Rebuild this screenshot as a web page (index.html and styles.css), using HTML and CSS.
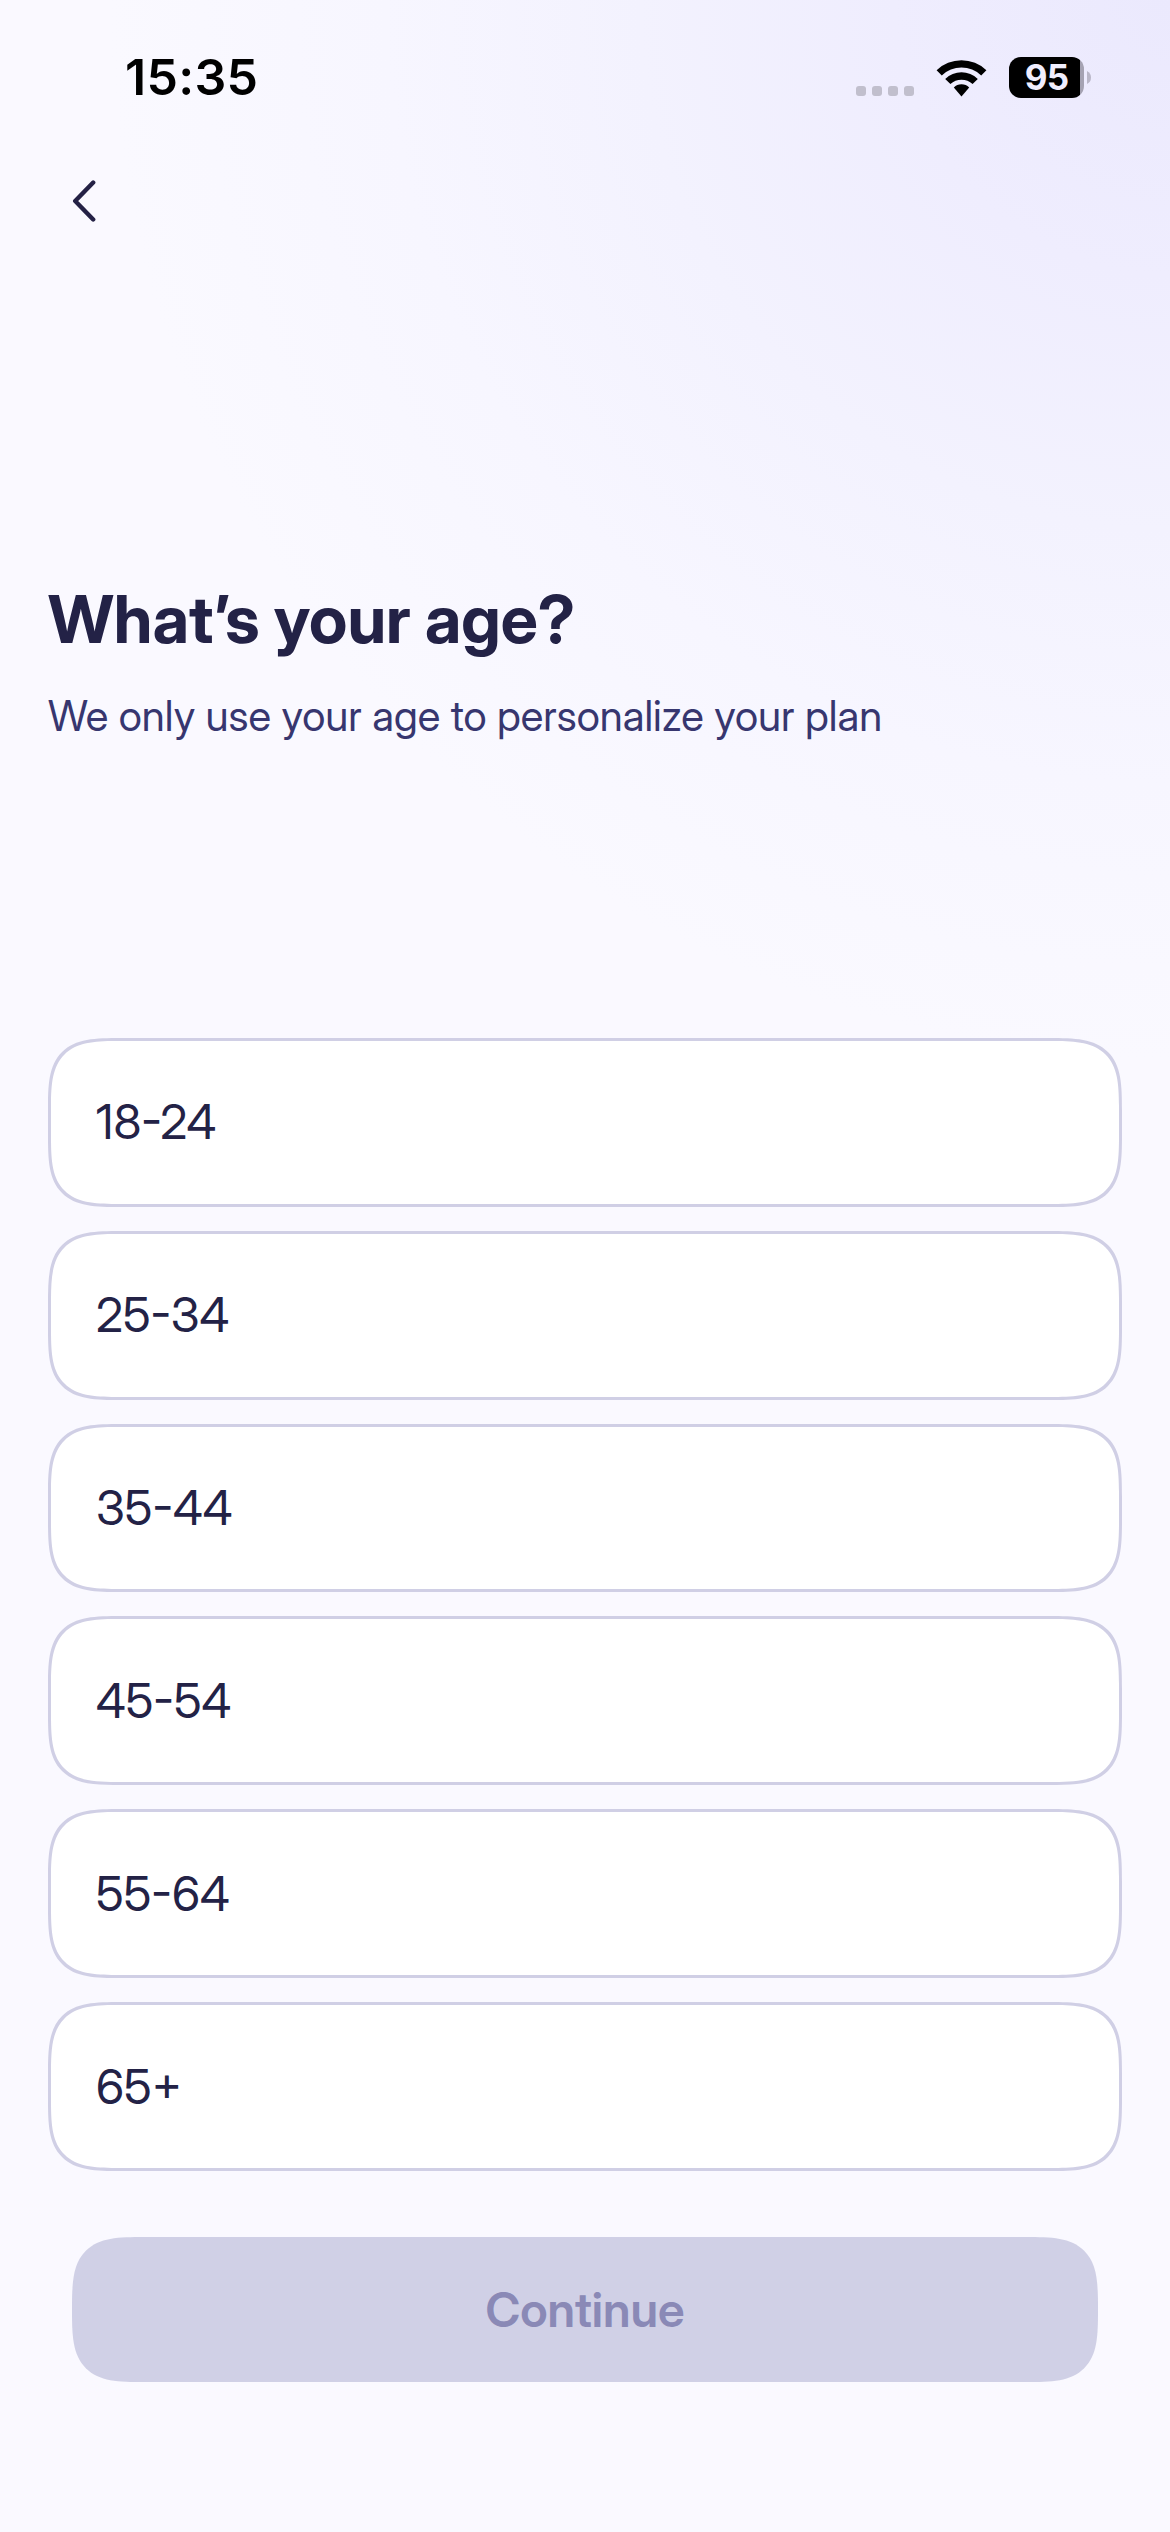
FILE: index.html
```html
<!DOCTYPE html>
<html lang="en">
<head>
<meta charset="utf-8">
<title>What’s your age?</title>
<link rel="stylesheet" href="styles.css">
</head>
<body>
<div class="screen">
  <header class="status-bar">
    <span class="time">15:35</span>
    <div class="status-icons">
      <div class="signal"><i></i><i></i><i></i><i></i></div>
      <svg class="wifi" width="51" height="38" viewBox="0 0 51 38">
        <path d="M0.6 11.2 A36 36 0 0 1 50.4 11.2 L45.2 16.4 A28.6 28.6 0 0 0 5.8 16.4 Z"/>
        <path d="M9.2 19.9 A23.6 23.6 0 0 1 41.8 19.9 L36.6 25.1 A16.2 16.2 0 0 0 14.4 25.1 Z"/>
        <path d="M17.8 28.5 A11 11 0 0 1 33.2 28.5 L25.5 37.4 Z"/>
      </svg>
      <div class="battery">
        <span class="battery-body">95</span>
        <svg class="battery-cap" width="4" height="13" viewBox="0 0 4 13"><path d="M0 0 Q4 2 4 6.5 Q4 11 0 13 Z"/></svg>
      </div>
    </div>
  </header>
  <nav class="nav">
    <button class="back" aria-label="Back">
      <svg width="24" height="42" viewBox="0 0 24 42"><path d="M21.2 2.5 L3.2 21 L21.2 39.5"/></svg>
    </button>
  </nav>
  <section class="intro">
    <h1 class="title">What’s your age?</h1>
    <p class="subtitle">We only use your age to personalize your plan</p>
  </section>
  <main class="options">
    <button class="option">18-24</button>
    <button class="option">25-34</button>
    <button class="option">35-44</button>
    <button class="option">45-54</button>
    <button class="option">55-64</button>
    <button class="option">65+</button>
  </main>
  <footer class="footer">
    <button class="continue" disabled>Continue</button>
  </footer>
</div>
</body>
</html>
```
FILE: styles.css
```css
* {
  box-sizing: border-box;
}

body {
  margin: 0;
  font-family: "Inter Display", Inter, "Liberation Sans", sans-serif;
}

button {
  margin: 0;
  font-family: inherit;
}

.screen {
  display: flex;
  flex-direction: column;
  width: 1170px;
  height: 2532px;
  background: radial-gradient(circle 1060px at 1170px 0, #ebe9fd 0%, #efedfe 26%, #f3f2fe 50%, #f7f6ff 74%, #faf9ff 100%) #faf9ff;
}

.status-bar {
  display: flex;
  justify-content: space-between;
  align-items: center;
  height: 155px;
  padding: 0 79px 0 125px;
}

.time {
  font-family: Inter, "Liberation Sans", sans-serif;
  font-size: 50px;
  font-weight: 600;
  line-height: 61px;
  letter-spacing: 0.3px;
  color: #000;
}

.status-icons {
  display: flex;
  align-items: center;
}

.signal {
  display: flex;
  gap: 6px;
  margin: 27px 22px 0 0;
}

.signal i {
  width: 10px;
  height: 10px;
  border-radius: 3px;
  background: #c1bfcd;
}

.wifi {
  margin-right: 22px;
}

.battery {
  display: flex;
  align-items: center;
  gap: 3px;
}

.battery-body {
  width: 75px;
  height: 41px;
  padding-right: 0;
  border-radius: 12px;
  background: linear-gradient(90deg, #000 71px, #a5a2b2 71px);
  color: #f0eefe;
  font-family: Inter, "Liberation Sans", sans-serif;
  font-size: 35px;
  font-weight: 700;
  line-height: 41px;
  letter-spacing: -0.8px;
  text-align: center;
}

.battery-cap {
  fill: #bab7c8;
}

.nav {
  display: flex;
  align-items: center;
  height: 91px;
  padding-left: 72px;
}

.back {
  display: flex;
  padding: 0;
  border: 0;
  background: none;
}

.back path {
  fill: none;
  stroke: #242145;
  stroke-width: 4.4;
  stroke-linecap: round;
  stroke-linejoin: round;
}

.intro {
  height: 792px;
  padding: 333px 48px 0;
}

.title {
  margin: 0;
  font-size: 66px;
  font-weight: 700;
  line-height: 80px;
  color: #232246;
}

.subtitle {
  margin: 31px 0 0;
  font-size: 42px;
  line-height: 52px;
  color: #37366f;
}

.options {
  display: flex;
  flex-direction: column;
  gap: 24px;
  height: 1133px;
  padding: 0 48px;
}

.option {
  flex: 1;
  padding: 0 45px 1px;
  border: 3px solid #d0cfe5;
  border-radius: 73px;
  corner-shape: superellipse(1.7);
  background: #fff;
  color: #232246;
  font-size: 48px;
  text-align: left;
}

.footer {
  padding: 66px 72px 0;
}

.continue {
  display: block;
  width: 100%;
  height: 145px;
  padding: 0;
  border: 0;
  border-radius: 72px;
  corner-shape: superellipse(1.7);
  background: #d0d0e6;
  color: #8a89b6;
  font-size: 48px;
  font-weight: 600;
}
```
